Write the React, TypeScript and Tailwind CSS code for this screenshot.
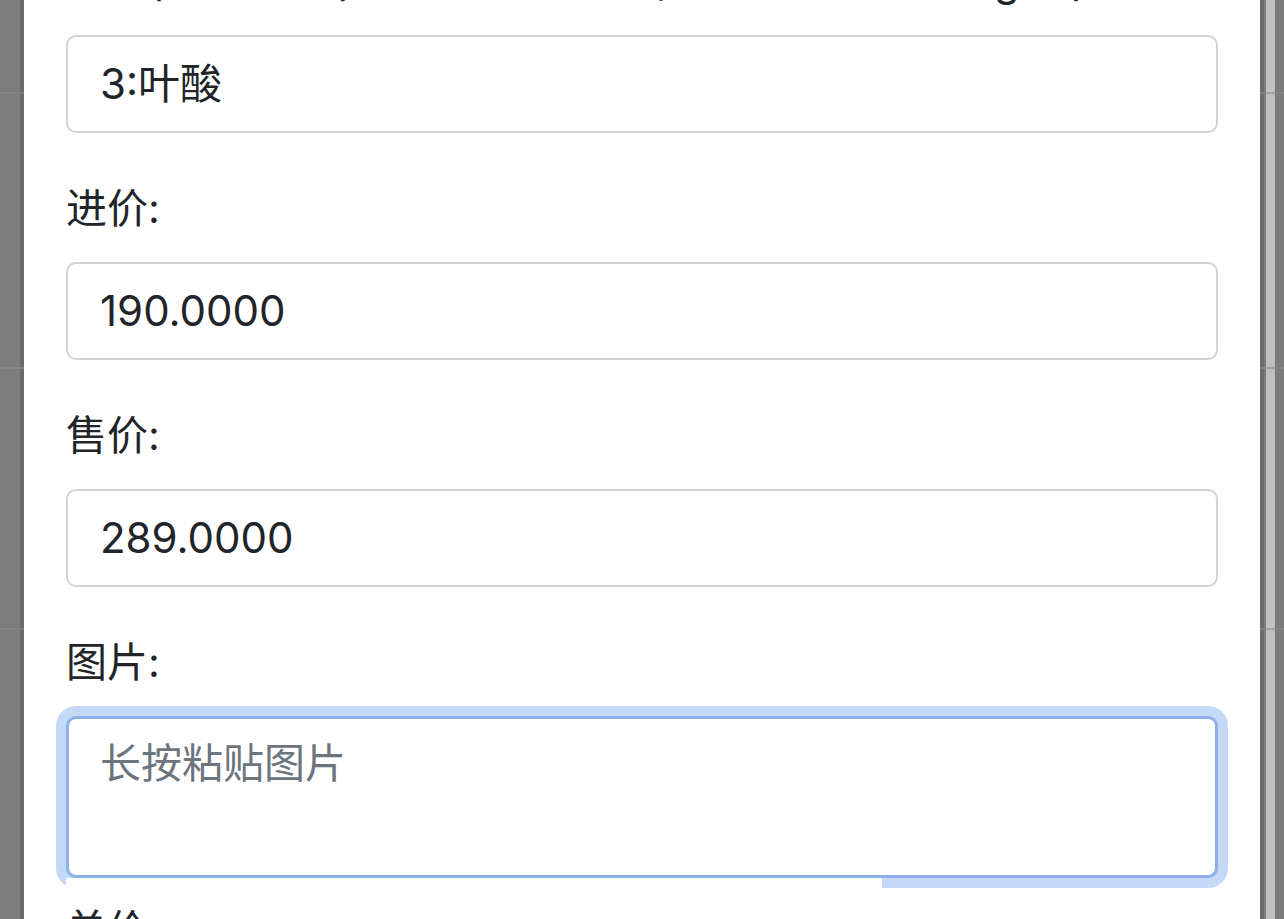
const font = { fontFamily: 'Inter, "Noto Sans CJK SC", sans-serif' };

function Field({ label, value }: { label: string; value: string }) {
  return (
    <div className="mb-[45px]">
      <label className="mb-[24px] block text-[41px] leading-[60px] text-[#212529]">{label}</label>
      <div className="flex h-[98px] items-center rounded-[10px] border-2 border-[#cfd4d9] bg-white px-[32px] text-[42px] leading-[60px] text-[#212529]">
        {value}
      </div>
    </div>
  );
}

function SideStrip({ right }: { right?: boolean }) {
  return (
    <div className="relative flex h-full w-[24px] shrink-0">
      {right ? (
        <>
          <div className="w-[4px] bg-[#6b6b6b]" />
          <div className="w-[2px] bg-[#7c7c7c]" />
          <div className="w-[9px] bg-[#c0c0c0]" />
          <div className="w-[9px] bg-[#7b7b7b]" />
        </>
      ) : (
        <>
          <div className="w-[20px] bg-[#7c7c7c]" />
          <div className="w-[4px] bg-[#6b6b6b]" />
        </>
      )}
      <div className="absolute left-0 right-0 top-[92px] h-[2px] bg-[#8a8a8a]/60" />
      <div className="absolute left-0 right-0 top-[367px] h-[2px] bg-[#8a8a8a]/60" />
      <div className="absolute left-0 right-0 top-[628px] h-[2px] bg-[#8a8a8a]/60" />
    </div>
  );
}

export default function App() {
  return (
    <div className="flex h-[919px] w-[1284px] overflow-hidden bg-white" style={font}>
      <SideStrip />
      <main className="flex-1 overflow-hidden bg-white px-[42px]">
        <div className="mt-[-49px]">
          <div className="mb-[45px]">
            <label className="mb-[24px] block whitespace-nowrap text-[41px] leading-[60px] text-[#212529]">
              分类(编号:名称)&nbsp;格式如&nbsp;1_保健品/&nbsp;3:叶酸_规格&nbsp;10mg&nbsp;装)
            </label>
            <div className="flex h-[98px] items-center rounded-[10px] border-2 border-[#cfd4d9] bg-white px-[32px] text-[42px] leading-[60px] text-[#212529]">
              3:叶酸
            </div>
          </div>
          <Field label="进价:" value="190.0000" />
          <Field label="售价:" value="289.0000" />
          <div className="mb-[21px]">
            <label className="mb-[24px] block text-[41px] leading-[60px] text-[#212529]">图片:</label>
            <div className="relative">
              <textarea
                placeholder="长按粘贴图片"
                className="block h-[162px] w-full resize-none rounded-[10px] border-[3px] border-[#8cb0ea] bg-white px-[31px] py-[14px] text-[41px] leading-[60px] text-[#212529] shadow-[0_0_0_10px_#c4d8f7] outline-none placeholder:text-[#6c757d]"
              />
              <div className="absolute left-0 top-[162px] h-[12px] w-[816px] bg-white" />
            </div>
          </div>
          <label className="block text-[41px] leading-[60px] text-[#212529]">单价:</label>
        </div>
      </main>
      <SideStrip right />
    </div>
  );
}
